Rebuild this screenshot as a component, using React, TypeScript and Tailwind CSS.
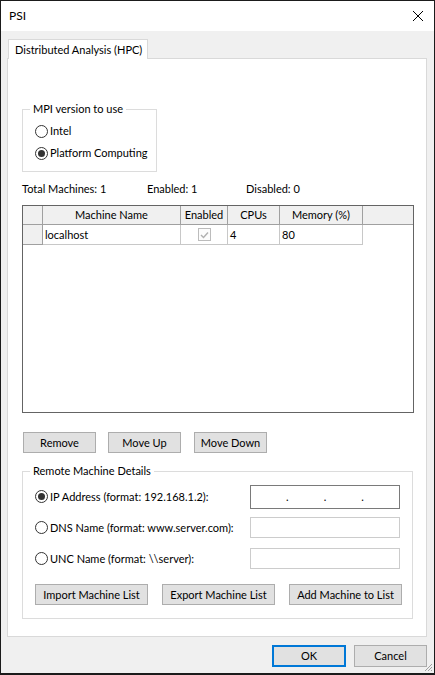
function Radio({ checked }: { checked?: boolean }) {
  return (
    <span className="w-[13px] h-[13px] rounded-full border border-[#333333] bg-white flex items-center justify-center shrink-0">
      {checked && <span className="w-[7px] h-[7px] rounded-full bg-[#333333]" />}
    </span>
  )
}

function Btn({ label, className }: { label: string; className: string }) {
  return (
    <button className={`h-[21px] border border-[#adadad] bg-[#e1e1e1] flex items-center justify-center ${className}`}>
      {label}
    </button>
  )
}

function HeaderCell({ label, className }: { label: string; className: string }) {
  return (
    <div className={`h-full bg-[#f0f0f0] border-r border-b border-[#a0a0a0] flex items-center justify-center ${className}`}>
      {label}
    </div>
  )
}

export default function App() {
  return (
    <div className="relative w-[435px] h-[675px] flex flex-col border border-b-2 border-[#1b1b1b] bg-[#f0f0f0] text-black text-[11px] leading-[16px] font-['Lato','Liberation_Sans',sans-serif]">
      <div className="h-[30px] bg-white flex items-center justify-between pl-[8px] pr-[11px] shrink-0">
        <span className="text-[12px]">PSI</span>
        <svg width="10" height="10" viewBox="0 0 10 10">
          <path d="M0 0L10 10M10 0L0 10" stroke="#000" strokeWidth="1" />
        </svg>
      </div>

      <div className="pt-[8px] pl-[6px] pr-[7px] flex flex-col">
        <div className="flex pl-[1px]">
          <div className="relative z-10 -mb-px h-[20px] w-[140px] bg-white border border-b-0 border-[#d9d9d9] pl-[6px] flex items-center whitespace-nowrap">
            Distributed Analysis (HPC)
          </div>
        </div>

        <div className="h-[579px] bg-white border border-[#d9d9d9] pl-[14px] pt-[42px] flex flex-col items-start">
          <fieldset className="w-[135px] border border-[#dcdcdc] pb-[7px]">
            <legend className="ml-[7px] px-[3px]">MPI version to use</legend>
            <div className="pt-[3px] pl-[12px] flex flex-col">
              <div className="h-[22px] flex items-center gap-[2px]">
                <Radio />
                <span>Intel</span>
              </div>
              <div className="h-[22px] flex items-center gap-[2px]">
                <Radio checked />
                <span>Platform Computing</span>
              </div>
            </div>
          </fieldset>

          <div className="mt-[9px] flex">
            <span className="w-[125px]">Total Machines: 1</span>
            <span className="w-[99px]">Enabled: 1</span>
            <span>Disabled: 0</span>
          </div>

          <div className="mt-[8px] w-[392px] h-[208px] border border-[#646464] bg-white flex flex-col">
            <div className="flex h-[19px]">
              <HeaderCell label="" className="w-[20px]" />
              <HeaderCell label="Machine Name" className="w-[138px]" />
              <HeaderCell label="Enabled" className="w-[47px]" />
              <HeaderCell label="CPUs" className="w-[52px]" />
              <HeaderCell label="Memory (%)" className="w-[83px]" />
              <div className="flex-1 h-full bg-[#f0f0f0] border-b border-[#a0a0a0]" />
            </div>
            <div className="flex h-[20px]">
              <div className="w-[20px] h-full bg-[#f0f0f0] border-r border-b border-[#a0a0a0]" />
              <div className="w-[138px] h-full border-r border-b border-[#c8c8c8] flex items-center pl-[2px]">localhost</div>
              <div className="w-[47px] h-full border-r border-b border-[#c8c8c8] flex items-center justify-center">
                <span className="w-[13px] h-[13px] border border-[#bcbcbc] bg-[#fcfcfc] flex items-center justify-center">
                  <svg width="9" height="8" viewBox="0 0 9 8">
                    <path d="M1 4L3.5 6.5L8 1.5" fill="none" stroke="#b0b0b0" strokeWidth="1.4" />
                  </svg>
                </span>
              </div>
              <div className="w-[52px] h-full border-r border-b border-[#c8c8c8] flex items-center pl-[2px]">4</div>
              <div className="w-[83px] h-full border-r border-b border-[#c8c8c8] flex items-center pl-[2px]">80</div>
            </div>
          </div>

          <div className="mt-[19px] ml-[1px] flex">
            <Btn label="Remove" className="w-[73px]" />
            <Btn label="Move Up" className="ml-[12px] w-[73px]" />
            <Btn label="Move Down" className="ml-[13px] w-[73px]" />
          </div>

          <fieldset className="mt-[10px] w-[391px] border border-[#dcdcdc] pb-[13px]">
            <legend className="ml-[7px] px-[3px]">Remote Machine Details</legend>
            <div className="pt-[2px] pl-[12px] flex flex-col">
              <div className="h-[31px] flex items-center">
                <Radio checked />
                <span className="ml-[2px] w-[200px]">IP Address (format: 192.168.1.2):</span>
                <div className="w-[150px] h-[24px] border border-[#7a7a7a] flex items-center">
                  <span className="flex-1" />
                  <span>.</span>
                  <span className="flex-1" />
                  <span>.</span>
                  <span className="flex-1" />
                  <span>.</span>
                  <span className="flex-1" />
                </div>
              </div>
              <div className="h-[31px] flex items-center">
                <Radio />
                <span className="ml-[2px] w-[200px]">DNS Name (format: www.server.com):</span>
                <div className="w-[150px] h-[21px] border border-[#cccccc]" />
              </div>
              <div className="h-[31px] flex items-center">
                <Radio />
                <span className="ml-[2px] w-[200px]">UNC Name (format: \\server):</span>
                <div className="w-[150px] h-[21px] border border-[#cccccc]" />
              </div>
              <div className="mt-[10px] flex gap-[14px]">
                <Btn label="Import Machine List" className="w-[113px]" />
                <Btn label="Export Machine List" className="w-[113px]" />
                <Btn label="Add Machine to List" className="w-[113px]" />
              </div>
            </div>
          </fieldset>
        </div>

        <div className="flex justify-end gap-[8px] pt-[8px]">
          <button className="w-[74px] h-[22px] border-2 border-[#0078d7] bg-[#e1e1e1] flex items-center justify-center">OK</button>
          <button className="w-[73px] h-[22px] border border-[#adadad] bg-[#e1e1e1] flex items-center justify-center">Cancel</button>
        </div>
      </div>

      <svg className="absolute right-[1px] bottom-[1px]" width="10" height="10" viewBox="0 0 10 10">
        <path d="M9 2L2 9M9 5L5 9M9 8L8 9" stroke="#a0a0a0" strokeWidth="1" />
      </svg>
    </div>
  )
}
